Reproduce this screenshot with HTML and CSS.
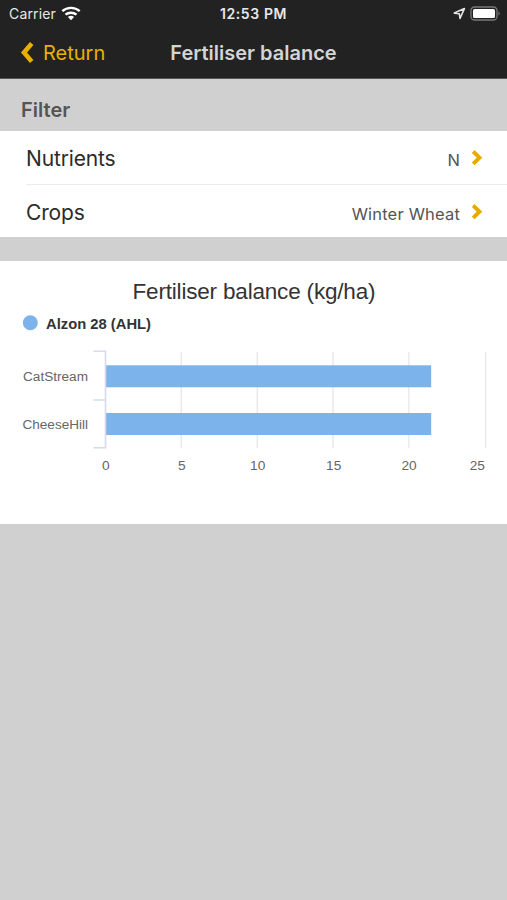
FILE: index.html
```html
<!DOCTYPE html>
<html lang="en">
<head>
<meta charset="utf-8">
<title>Fertiliser balance</title>
<link rel="stylesheet" href="styles.css">
</head>
<body>
<header class="header">
  <div class="status">
    <div class="status-left"><span class="carrier">Carrier</span>
      <svg class="wifi" width="20" height="15" viewBox="0 0 20 15"><g fill="none" stroke="#fff" stroke-width="2.4"><path d="M1.3 5.2C6.2 .8 13.8.8 18.700 5.200"/><path d="M4.500 8.700C7.600 6 12.400 6 15.500 8.700"/></g><path d="M6.900 10.900Q10 8.600 13.100 10.900L10 14.200Z" fill="#fff"/></svg>
    </div>
    <span class="clock">12:53 PM</span>
    <div class="status-right">
      <svg width="13" height="13" viewBox="0 0 13 13"><path d="M1.300 6.100L11.400 1.600L7 11.500L6.300 6.700Z" fill="none" stroke="#e4e4e4" stroke-width="1.600" stroke-linejoin="round"/></svg>
      <svg width="31" height="15" viewBox="0 0 31 15"><rect x="1" y="1" width="26" height="13" rx="3.500" fill="none" stroke="#77797b" stroke-width="1.300"/><rect x="3" y="3" width="22" height="9" rx="1.500" fill="#fff"/><path d="M28.500 5.200Q31 7.500 28.500 9.800Z" fill="#77797b"/></svg>
    </div>
  </div>
  <nav class="nav">
    <a class="back"><svg width="14" height="22" viewBox="0 0 14 22"><path d="M11.700 1.500L4 10.500L11.700 19.500" fill="none" stroke="#e9b000" stroke-width="4.600"/></svg><span>Return</span></a>
    <h1 class="title">Fertiliser balance</h1>
  </nav>
</header>
<main>
  <h2 class="section">Filter</h2>
  <div class="list">
    <div class="row"><span class="label">Nutrients</span><span class="value">N</span><svg class="chevron" width="12" height="16" viewBox="0 0 12 16"><path d="M2.200 1.500L8.500 7.700L2.200 13.900" fill="none" stroke="#e6aa00" stroke-width="3.900"/></svg></div>
    <div class="row"><span class="label">Crops</span><span class="value">Winter Wheat</span><svg class="chevron" width="12" height="16" viewBox="0 0 12 16"><path d="M2.200 1.500L8.500 7.700L2.200 13.900" fill="none" stroke="#e6aa00" stroke-width="3.900"/></svg></div>
  </div>
  <section class="card">
    <svg class="chart" width="507" height="262" viewBox="0 261 507 262">
      <text class="chart-title" x="254" y="299" text-anchor="middle" textLength="243">Fertiliser balance (kg/ha)</text>
      <circle cx="30.300" cy="322.700" r="7.500" fill="#7cb3eb"/>
      <text class="legend" x="46" y="328.500" textLength="105" lengthAdjust="spacingAndGlyphs">Alzon 28 (AHL)</text>
      <g class="grid"><path d="M181.300 352V448M257.300 352V448M333 352V448M408.800 352V448M485.600 352V448"/></g>
      <g class="bars"><rect x="106" y="365.300" width="325.200" height="22"/><rect x="106" y="413" width="325.200" height="22"/></g>
      <path class="axis" d="M93.500 351.300H105.500V447.700H93.500M93.500 400H105.500"/>
      <g class="tick">
        <text x="23" y="381" textLength="65" lengthAdjust="spacingAndGlyphs">CatStream</text>
        <text x="22.500" y="428.500" textLength="65.500" lengthAdjust="spacingAndGlyphs">CheeseHill</text>
        <g text-anchor="middle"><text x="105.800" y="470">0</text><text x="181.700" y="470">5</text><text x="257.700" y="470">10</text><text x="333.700" y="470">15</text><text x="409" y="470">20</text><text x="477.300" y="470">25</text></g>
      </g>
    </svg>
  </section>
</main>
</body>
</html>
```
FILE: styles.css
```css
* { box-sizing: border-box; }
body { margin: 0; min-height: 900px; background: #d0d0d0; font-family: Inter, "Liberation Sans", sans-serif; color: #2b2b2b; }
svg { display: block; flex: none; }
.header { height: 79px; background: #222; border-bottom: 1px solid #555; }
.status { display: grid; grid-template-columns: 1fr auto 1fr; align-items: center; height: 27px; padding: 0 6px; color: #e8e8e8; }
.status-left { display: flex; align-items: center; gap: 5px; padding-left: 3px; font-size: 14px; }
.carrier { letter-spacing: .15px; }
.clock { font-size: 14px; font-weight: 600; letter-spacing: .6px; }
.status-right { display: flex; align-items: center; justify-content: flex-end; gap: 4px; }
.nav { display: grid; grid-template-columns: 1fr auto 1fr; align-items: center; height: 51px; }
.back { display: flex; align-items: center; gap: 9px; padding-left: 20px; color: #e9b000; font-size: 20px; }
.title { margin: 0; font-size: 20px; font-weight: 600; color: #d4d4d4; letter-spacing: 0; }
.section { margin: 0; height: 52px; padding: 11px 21px 0; font-size: 20px; line-height: 40px; font-weight: 600; color: #555; }
.list { height: 106px; background: #fff; padding-left: 26px; }
.row { display: flex; align-items: center; height: 53px; padding-right: 24px; padding-top: 1px; }
.row + .row { border-top: 1px solid #ececec; padding-top: 2px; }
.label { flex: 1; font-size: 21px; letter-spacing: -.15px; padding-top: 1px; }
.value { font-size: 16.500px; letter-spacing: .18px; color: #555; padding-top: 4px; }
.chevron { margin-left: 11px; }
.card { height: 263px; margin-top: 24px; background: #fff; }
.chart { font-family: "Liberation Sans", Arial, sans-serif; }
.chart-title { font-size: 22.500px; fill: #333; }
.legend { font-size: 15px; font-weight: 700; fill: #333; }
.tick { font-size: 13.700px; fill: #666; }
.grid { fill: none; stroke: #e9e9ec; stroke-width: 1.400; }
.bars { fill: #7cb3eb; }
.axis { fill: none; stroke: #d6daec; stroke-width: 1.600; }
```
